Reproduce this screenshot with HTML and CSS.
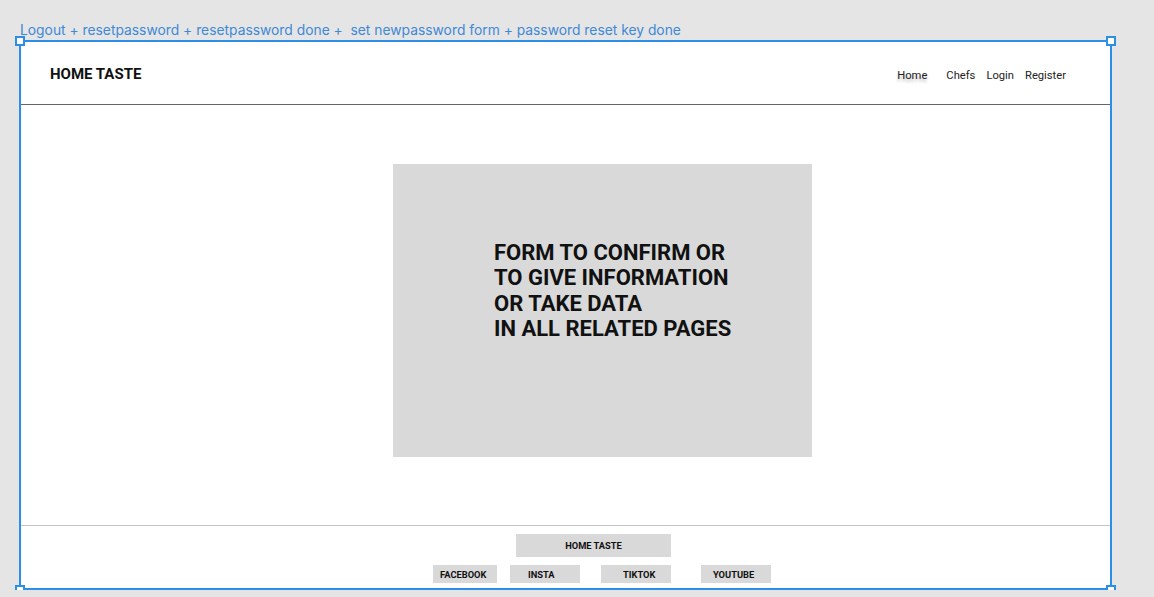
FILE: index.html
```html
<!DOCTYPE html>
<html>
<head>
<meta charset="utf-8">
<title>Home Taste</title>
<link rel="stylesheet" href="styles.css">
</head>
<body>
<div class="canvas">
  <div class="frame-label">Logout + resetpassword + resetpassword done +&nbsp; set newpassword form + password reset key done</div>
  <div class="frame">
    <span class="handle handle-tl"></span>
    <span class="handle handle-tr"></span>
    <span class="handle handle-bl"></span>
    <span class="handle handle-br"></span>
    <header class="topbar">
      <div class="brand">HOME TASTE</div>
      <nav class="nav">
        <a class="nav-link nav-home">Home</a>
        <a class="nav-link nav-chefs">Chefs</a>
        <a class="nav-link nav-login">Login</a>
        <a class="nav-link nav-register">Register</a>
      </nav>
    </header>
    <main class="content">
      <div class="placeholder">
        <p class="placeholder-text">FORM TO CONFIRM OR<br>TO GIVE INFORMATION<br>OR TAKE DATA<br>IN ALL RELATED PAGES</p>
      </div>
    </main>
    <footer class="footer">
      <div class="foot-brand">HOME TASTE</div>
      <div class="socials">
        <div class="social social-fb">FACEBOOK</div>
        <div class="social social-insta">INSTA</div>
        <div class="social social-tiktok">TIKTOK</div>
        <div class="social social-yt">YOUTUBE</div>
      </div>
    </footer>
  </div>
</div>
</body>
</html>
```

FILE: styles.css
```css
body {
  margin: 0;
  background: #e5e5e5;
  font-family: Roboto, "Liberation Sans", sans-serif;
}

.canvas {
  padding: 22px 0 0 19px;
}

.frame-label {
  font-family: Inter, "Liberation Sans", sans-serif;
  font-size: 13.83px;
  line-height: 17px;
  height: 18px;
  color: #4089d6;
  margin-left: 1px;
  white-space: nowrap;
}

.frame {
  position: relative;
  box-sizing: border-box;
  width: 1093px;
  height: 550px;
  border: 2px solid #2d8ee6;
  background: #fff;
  display: flex;
  flex-direction: column;
}

.handle {
  position: absolute;
  box-sizing: border-box;
  width: 10px;
  height: 10px;
  background: #fff;
  border: 2px solid #2d8ee6;
  z-index: 2;
}
.handle-tl { left: -6px; top: -6px; }
.handle-tr { right: -6px; top: -6px; }
.handle-bl { left: -6px; bottom: -7px; }
.handle-br { right: -6px; bottom: -7px; }

.topbar {
  height: 60px;
  flex: none;
  border-bottom: 1px solid #666;
  display: flex;
  align-items: center;
  justify-content: space-between;
  padding: 2px 44px 0 29px;
}

.brand {
  font-size: 15px;
  font-weight: 700;
  color: #111;
}

.nav {
  display: flex;
  align-items: center;
  font-size: 11.2px;
  color: #222;
  padding-top: 2px;
}

.nav-home {
  text-shadow: 0 3px 3px rgba(0, 0, 0, 0.25);
}
.nav-chefs { margin-left: 19px; }
.nav-login { margin-left: 11px; }
.nav-register { margin-left: 11px; }

.content {
  height: 420px;
  flex: none;
  box-sizing: border-box;
  padding: 59px 0 0 372px;
}

.placeholder {
  box-sizing: border-box;
  width: 419px;
  height: 293px;
  background: #d9d9d9;
  padding: 76px 0 0 101px;
}

.placeholder-text {
  margin: 0;
  font-size: 22px;
  line-height: 25.4px;
  font-weight: 700;
  color: #111;
}

.footer {
  flex: 1;
  border-top: 1px solid #c4c4c4;
}

.foot-brand {
  width: 155px;
  height: 23px;
  margin: 8px 0 0 495px;
  background: #d9d9d9;
  font-size: 9.3px;
  font-weight: 700;
  color: #111;
  display: flex;
  align-items: center;
  justify-content: center;
}

.socials {
  display: flex;
  margin: 8px 0 0 412px;
}

.social {
  box-sizing: border-box;
  height: 18px;
  background: #d9d9d9;
  font-size: 9.3px;
  font-weight: 700;
  color: #111;
  display: flex;
  align-items: center;
}
.social-fb { width: 64px; padding-left: 7px; }
.social-insta { width: 70px; margin-left: 13px; padding-left: 18px; }
.social-tiktok { width: 70px; margin-left: 21px; padding-left: 22px; }
.social-yt { width: 70px; margin-left: 30px; padding-left: 12px; }
```
